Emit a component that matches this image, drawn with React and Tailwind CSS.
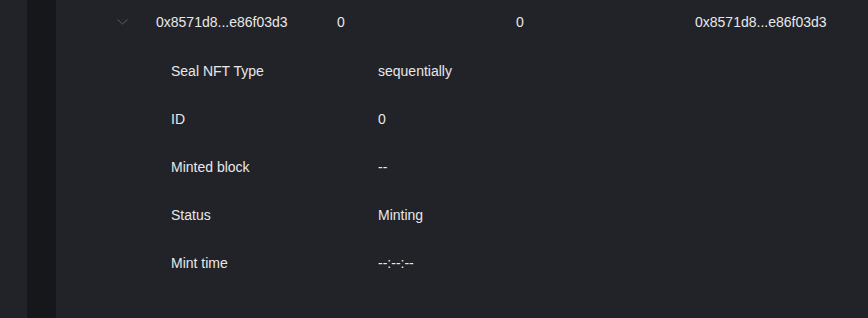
const HASH = '0x8571d8...e86f03d3';

const details = [
  { label: 'Seal NFT Type', value: 'sequentially' },
  { label: 'ID', value: '0' },
  { label: 'Minted block', value: '--' },
  { label: 'Status', value: 'Minting' },
  { label: 'Mint time', value: '--:--:--' },
];

function Chevron() {
  return (
    <svg width="11" height="6" viewBox="0 0 11 6" fill="none" className="block">
      <path d="M0.5 0.5L5.5 5L10.5 0.5" stroke="#5b5d64" strokeWidth="1" />
    </svg>
  );
}

export default function App() {
  return (
    <div
      className="flex h-[318px] w-[868px] overflow-hidden bg-[#222328] text-[14px] text-[#e8e8e8]"
      style={{ fontFamily: '"Liberation Sans", Arial, sans-serif' }}
    >
      <div className="w-[27px] shrink-0" />
      <div className="w-[29px] shrink-0 bg-[#16171a]" />

      <div className="flex-1">
        {/* expanded row header */}
        <div className="flex h-[44px] items-center">
          <div className="w-[61px] shrink-0" />
          <div className="w-[39px] shrink-0">
            <Chevron />
          </div>
          <div className="w-[181px] shrink-0">{HASH}</div>
          <div className="w-[179px] shrink-0">0</div>
          <div className="w-[179px] shrink-0">0</div>
          <div>{HASH}</div>
        </div>

        {/* details */}
        <div className="pt-[3px]">
          {details.map((d) => (
            <div key={d.label} className="flex h-[48px] items-center pl-[115px]">
              <div className="w-[207px] shrink-0">{d.label}</div>
              <div>{d.value}</div>
            </div>
          ))}
        </div>
      </div>
    </div>
  );
}
